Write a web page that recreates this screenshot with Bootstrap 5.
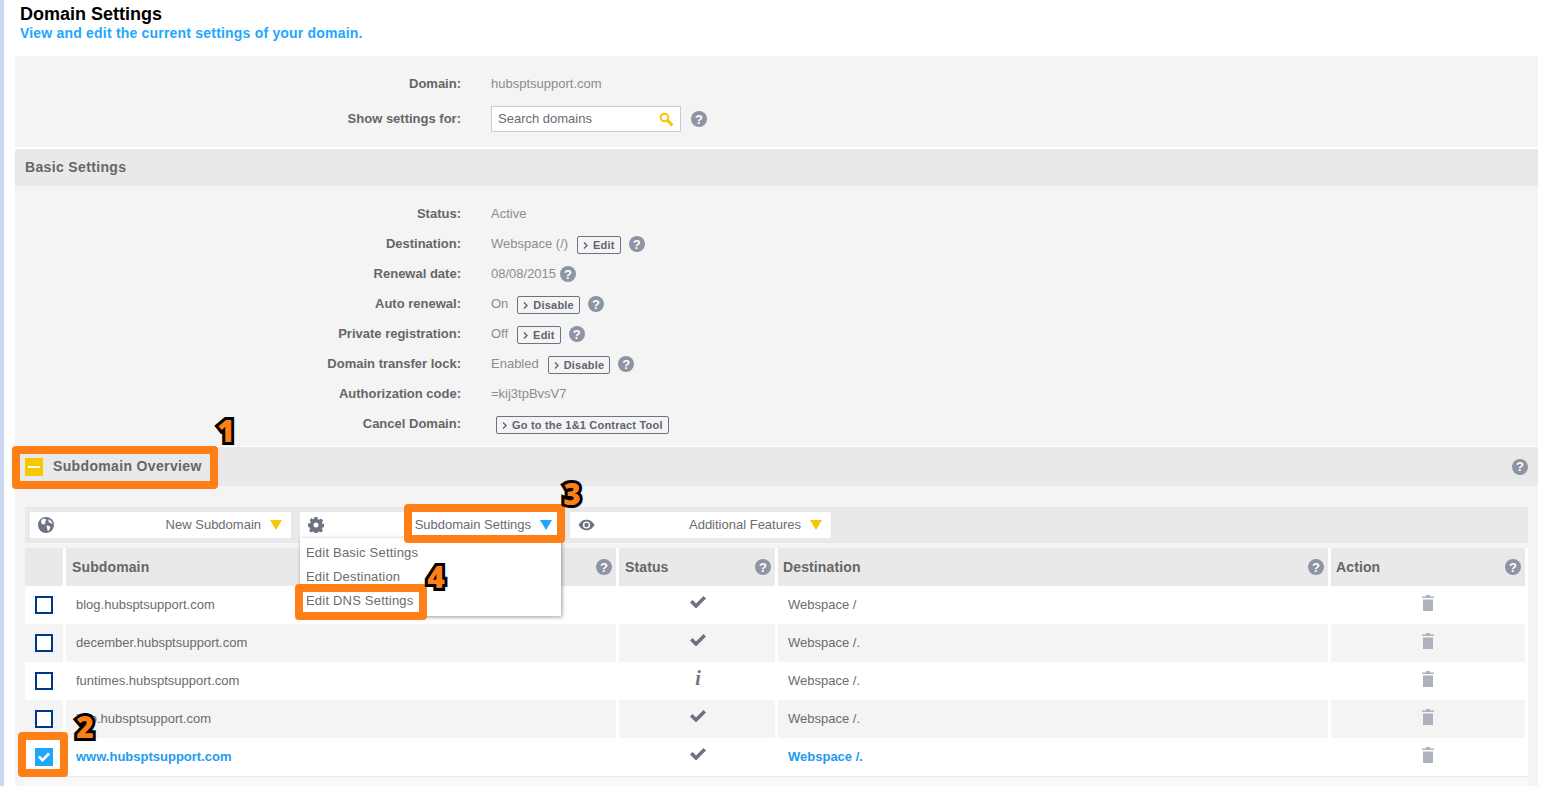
<!DOCTYPE html>
<html lang="en">
<head>
<meta charset="utf-8">
<title>Domain Settings</title>
<link href="https://cdn.jsdelivr.net/npm/bootstrap@5.3.0/dist/css/bootstrap.min.css" rel="stylesheet">
<style>
html,body{height:100%;overflow:hidden;background:#fff}
body{font-family:"Liberation Sans",Arial,sans-serif;font-size:13px;color:#6b6b70;position:relative;line-height:20px}
.edge-strip{width:4px;background:#c9d9ef;flex:none}
.page-main{flex:1;min-width:0;padding-right:8px;padding-left:11px}
.page-head{height:56px;padding:3px 0 0 5px}
.page-title{font-size:18px;font-weight:700;color:#000;line-height:22px;margin:0}
.page-sub{font-size:14px;font-weight:700;color:#1ea7fd;line-height:17px;margin:0;letter-spacing:.2px}
.panel-box{background:#f4f4f4;height:730px}
.top-fields{height:91px;padding-top:12px}
.field-row{height:30px}
.field-gap{margin-top:6px}
.field-lbl{width:446px;text-align:right;font-weight:700;color:#666;flex:none;margin-right:30px;padding-top:2px}
.field-val{color:#8c8c8c;padding-top:2px}
.field-row .help-dot{margin-top:2px}
.field-gap .field-lbl{padding-top:0}
.field-gap .help-dot{margin-top:0;margin-left:10px}
.base-fields{height:260px;padding-top:12px}
.bar-head{background:#e9e9e9;font-weight:700;color:#666;font-size:14px;letter-spacing:.35px;padding:0 10px}
.bar-title{padding-bottom:2px}
.bar-basic{height:39px;border-top:2px solid #fff}
.bar-sub{height:40px;border-top:1px solid #fff}
.help-dot{display:inline-flex;align-items:center;justify-content:center;width:16px;height:16px;border-radius:50%;background:#8d94a3;color:#fff;font-weight:700;font-size:13px;line-height:1;letter-spacing:0;flex:none}
.act-btn{--bs-btn-padding-x:5px;--bs-btn-padding-y:0;--bs-btn-font-size:11px;--bs-btn-font-weight:700;--bs-btn-color:#5f6470;--bs-btn-border-color:#6c7383;--bs-btn-border-radius:2px;--bs-btn-line-height:16px;--bs-btn-hover-color:#5f6470;--bs-btn-hover-border-color:#6c7383;letter-spacing:.2px;display:inline-flex;align-items:center;gap:5px;height:18px;margin-top:4px;margin-left:9px}
.act-wide{margin-left:5px}
.act-btn svg{width:5px;height:7px}
.search-field{width:190px;height:26px;border:1px solid #ccc;background:#fff;padding:0 6px;color:#6b6b70}
.search-field input{border:0;outline:0;background:transparent;padding:0;color:#6b6b70;width:150px;font-size:13px}
.search-field input::placeholder{color:#6b6b70;opacity:1}
.sq-toggle{width:18px;height:18px;background:#f8c700;margin-right:10px;position:relative;flex:none}
.sq-toggle::after{content:"";position:absolute;left:3px;right:3px;top:8px;height:2px;background:#fff}
.tool-strip{background:#e9e9e9;height:36px;margin:21px 10px 5px;padding:5px;gap:9px}
.tool-btn{width:261px;height:26px;background:#fff;padding:0 9px 0 8px;color:#6b6b70;position:relative}
.tool-gear{z-index:2}
.tri{width:0;height:0;border-left:6px solid transparent;border-right:6px solid transparent;border-top:10px solid #f8c700;margin-left:9px;flex:none}
.tri-blue{border-top-color:#1ea7fd}
.tool-menu{position:absolute;left:0;top:26px;width:261px;height:78px;background:#fff;box-shadow:1px 1px 4px rgba(0,0,0,.4);padding:3px 0 1px;z-index:3;letter-spacing:.2px}
.tool-menu div{height:24px;line-height:24px;padding-left:6px}
.ic{fill:#6c7281;display:block}
.ic-trash{fill:#aeb2bc}
.dom-wrap{background:#fff;margin:0 10px;height:229px;border-bottom:1px solid #e9e9e9}
.dom-foot{background:#f8f8f8;margin:0 10px;height:12px}
.dom-grid{width:1503px;table-layout:fixed;border-collapse:separate;border-spacing:0}
.dom-grid th,.dom-grid td{height:38px;padding:0;border-right:3px solid #fff;vertical-align:middle}
.dom-grid th{background:#e9e9e9;color:#666;font-weight:700;font-size:14px;letter-spacing:.12px}
.dom-grid th>div{display:flex;justify-content:space-between;align-items:center;padding:0 4px 0 6px}
.dom-grid th:nth-child(4)>div,.dom-grid th:nth-child(5)>div{padding-left:5px}
.dom-grid tbody tr:nth-child(even) td{background:#f4f4f4}
.dom-grid td.sub-cell,.dom-grid td.dest-cell{padding-left:10px;color:#6b6b70;font-size:13px}
.dom-grid tr.picked td.sub-cell,.dom-grid tr.picked td.dest-cell{color:#1e9bf0;font-weight:700}
.chk-box{display:block;width:18px;height:18px;border:2px solid #00378a;margin-left:10px;background:#fff}
.chk-on{background:#1ea7fd;border-color:#1ea7fd;display:flex;align-items:center;justify-content:center}
.ic-cell svg{margin:-6px auto 0}
.ic-cell svg.ic-trash{margin-top:-4px}
.dom-grid td.st-cell{padding-left:2px}
.info-i{font-family:"Liberation Serif",serif;font-style:italic;font-weight:700;font-size:20px;color:#6c7281;text-align:center;margin-top:-7px;line-height:20px}
.call-box{position:absolute;border:8px solid #ff7f17;border-radius:4px;pointer-events:none;z-index:5}
.call-num{position:absolute;font-family:"Open Sans","Liberation Sans",sans-serif;font-weight:800;font-size:30px;line-height:1;color:#ff7f17;-webkit-text-stroke:6px #000;paint-order:stroke fill;text-shadow:1px 2px 2px rgba(0,0,0,.5);z-index:6;transform:translate(-50%,-50%)}
</style>
</head>
<body class="d-flex">
<div class="edge-strip"></div>
<div class="page-main">
  <div class="page-head">
    <h1 class="page-title">Domain Settings</h1>
    <p class="page-sub">View and edit the current settings of your domain.</p>
  </div>
  <div class="panel-box">
    <div class="top-fields">
      <div class="d-flex align-items-center field-row"><div class="field-lbl">Domain:</div><div class="field-val">hubsptsupport.com</div></div>
      <div class="d-flex align-items-center field-row field-gap"><div class="field-lbl">Show settings for:</div>
        <div class="search-field d-flex align-items-center justify-content-between">
          <input type="text" placeholder="Search domains" aria-label="Search domains">
          <svg width="15" height="15" viewBox="0 0 15 15"><circle cx="5.5" cy="5.5" r="3.8" fill="none" stroke="#f8c700" stroke-width="2"/><path d="M8.3 8.3L13.500 13.500" stroke="#f8c700" stroke-width="3"/></svg>
        </div>
        <span class="help-dot">?</span>
      </div>
    </div>
    <div class="bar-head bar-basic d-flex align-items-center"><span class="bar-title">Basic Settings</span></div>
    <div class="base-fields">
      <div class="d-flex align-items-center field-row"><div class="field-lbl">Status:</div><div class="field-val">Active</div></div>
      <div class="d-flex align-items-center field-row"><div class="field-lbl">Destination:</div><div class="field-val">Webspace (/)</div>
        <button type="button" class="btn act-btn"><svg viewBox="0 0 5 7"><path d="M1 .5L4 3.500L1 6.500" fill="none" stroke="#5f6470" stroke-width="1.4"/></svg>Edit</button><span class="help-dot ms-2">?</span></div>
      <div class="d-flex align-items-center field-row"><div class="field-lbl">Renewal date:</div><div class="field-val">08/08/2015</div><span class="help-dot ms-1">?</span></div>
      <div class="d-flex align-items-center field-row"><div class="field-lbl">Auto renewal:</div><div class="field-val">On</div>
        <button type="button" class="btn act-btn"><svg viewBox="0 0 5 7"><path d="M1 .5L4 3.500L1 6.500" fill="none" stroke="#5f6470" stroke-width="1.4"/></svg>Disable</button><span class="help-dot ms-2">?</span></div>
      <div class="d-flex align-items-center field-row"><div class="field-lbl">Private registration:</div><div class="field-val">Off</div>
        <button type="button" class="btn act-btn"><svg viewBox="0 0 5 7"><path d="M1 .5L4 3.500L1 6.500" fill="none" stroke="#5f6470" stroke-width="1.4"/></svg>Edit</button><span class="help-dot ms-2">?</span></div>
      <div class="d-flex align-items-center field-row"><div class="field-lbl">Domain transfer lock:</div><div class="field-val">Enabled</div>
        <button type="button" class="btn act-btn"><svg viewBox="0 0 5 7"><path d="M1 .5L4 3.500L1 6.500" fill="none" stroke="#5f6470" stroke-width="1.4"/></svg>Disable</button><span class="help-dot ms-2">?</span></div>
      <div class="d-flex align-items-center field-row"><div class="field-lbl">Authorization code:</div><div class="field-val">=kij3tpBvsV7</div></div>
      <div class="d-flex align-items-center field-row"><div class="field-lbl">Cancel Domain:</div>
        <button type="button" class="btn act-btn act-wide"><svg viewBox="0 0 5 7"><path d="M1 .5L4 3.500L1 6.500" fill="none" stroke="#5f6470" stroke-width="1.4"/></svg>Go to the 1&amp;1 Contract Tool</button></div>
    </div>
    <div class="bar-head bar-sub d-flex align-items-center justify-content-between">
      <div class="d-flex align-items-center"><span class="sq-toggle"></span><span class="bar-title">Subdomain Overview</span></div>
      <span class="help-dot">?</span>
    </div>
    <div class="tool-strip d-flex">
      <div class="tool-btn d-flex align-items-center justify-content-between">
        <svg class="ic" width="16" height="16" viewBox="0 0 16 16"><circle cx="8" cy="8" r="8"/><path d="M3.500 2.500L7 1.500L8.500 3L7 5L7.500 7L5 7.500L3 6ZM8.500 8.500L11.500 9L12.500 10.500L10.500 14L9.500 13.500L9 11ZM10.500 2L13.500 4.500L14.500 7L12 6L10.500 4.500Z" fill="#fff"/></svg>
        <span class="d-flex align-items-center">New Subdomain<span class="tri"></span></span>
      </div>
      <div class="tool-btn tool-gear d-flex align-items-center justify-content-between">
        <svg class="ic" width="16" height="16" viewBox="0 0 16 16"><path d="M6.600 0h2.800l.4 2.200 1.300.6 1.900-1.200 2 2-1.200 1.900.6 1.300 2.100.4v2.800l-2.100.4-.6 1.300 1.200 1.900-2 2-1.900-1.200-1.300.6-.4 2.100H6.600l-.4-2.100-1.300-.6L3 15.600l-2-2 1.200-1.900-.6-1.300L0 9.400V6.600l2.200-.4.6-1.300L1.600 3l2-2 1.300 1.200 1.300-.6z"/><circle cx="8" cy="8" r="2.500" fill="#fff"/></svg>
        <span class="d-flex align-items-center">Subdomain Settings<span class="tri tri-blue"></span></span>
        <div class="tool-menu"><div>Edit Basic Settings</div><div>Edit Destination</div><div>Edit DNS Settings</div></div>
      </div>
      <div class="tool-btn d-flex align-items-center justify-content-between">
        <svg class="ic" width="17" height="12" viewBox="0 0 17 12"><path d="M.5 6C3 2 5.500.8 8.500.8S14 2 16.500 6C14 10 11.500 11.200 8.500 11.200S3 10 .5 6Z"/><circle cx="8.500" cy="6" r="3.600" fill="#fff"/><circle cx="8.500" cy="6" r="2.200"/></svg>
        <span class="d-flex align-items-center">Additional Features<span class="tri"></span></span>
      </div>
    </div>
    <div class="dom-wrap">
      <table class="dom-grid">
        <colgroup><col style="width:41px"><col style="width:553px"><col style="width:159px"><col style="width:553px"><col style="width:197px"></colgroup>
        <thead><tr>
          <th></th>
          <th><div>Subdomain<span class="help-dot">?</span></div></th>
          <th><div>Status<span class="help-dot">?</span></div></th>
          <th><div>Destination<span class="help-dot">?</span></div></th>
          <th><div>Action<span class="help-dot">?</span></div></th>
        </tr></thead>
        <tbody>
          <tr><td><span class="chk-box"></span></td><td class="sub-cell">blog.hubsptsupport.com</td><td class="ic-cell st-cell"><svg class="ic" width="16" height="12" viewBox="0 0 16 12"><path d="M0 6.500L2.500 4L6 7.500L13.500 0L16 2.500L6 12.500Z"/></svg></td><td class="dest-cell">Webspace /</td><td class="ic-cell"><svg class="ic ic-trash" width="12" height="16" viewBox="0 0 12 16"><path d="M4 0h4v1.500h4V3H0V1.500h4ZM1 4.500h10V16H1Z"/></svg></td></tr>
          <tr><td><span class="chk-box"></span></td><td class="sub-cell">december.hubsptsupport.com</td><td class="ic-cell st-cell"><svg class="ic" width="16" height="12" viewBox="0 0 16 12"><path d="M0 6.500L2.500 4L6 7.500L13.500 0L16 2.500L6 12.500Z"/></svg></td><td class="dest-cell">Webspace /.</td><td class="ic-cell"><svg class="ic ic-trash" width="12" height="16" viewBox="0 0 12 16"><path d="M4 0h4v1.500h4V3H0V1.500h4ZM1 4.500h10V16H1Z"/></svg></td></tr>
          <tr><td><span class="chk-box"></span></td><td class="sub-cell">funtimes.hubsptsupport.com</td><td class="st-cell"><div class="info-i">i</div></td><td class="dest-cell">Webspace /.</td><td class="ic-cell"><svg class="ic ic-trash" width="12" height="16" viewBox="0 0 12 16"><path d="M4 0h4v1.500h4V3H0V1.500h4ZM1 4.500h10V16H1Z"/></svg></td></tr>
          <tr><td><span class="chk-box"></span></td><td class="sub-cell">info.hubsptsupport.com</td><td class="ic-cell st-cell"><svg class="ic" width="16" height="12" viewBox="0 0 16 12"><path d="M0 6.500L2.500 4L6 7.500L13.500 0L16 2.500L6 12.500Z"/></svg></td><td class="dest-cell">Webspace /.</td><td class="ic-cell"><svg class="ic ic-trash" width="12" height="16" viewBox="0 0 12 16"><path d="M4 0h4v1.500h4V3H0V1.500h4ZM1 4.500h10V16H1Z"/></svg></td></tr>
          <tr class="picked"><td><span class="chk-box chk-on"><svg width="12" height="10" viewBox="0 0 16 12"><path d="M0 6.500L2.500 4L6 7.500L13.500 0L16 2.500L6 12.500Z" fill="#fff"/></svg></span></td><td class="sub-cell">www.hubsptsupport.com</td><td class="ic-cell st-cell"><svg class="ic" width="16" height="12" viewBox="0 0 16 12"><path d="M0 6.500L2.500 4L6 7.500L13.500 0L16 2.500L6 12.500Z"/></svg></td><td class="dest-cell">Webspace /.</td><td class="ic-cell"><svg class="ic ic-trash" width="12" height="16" viewBox="0 0 12 16"><path d="M4 0h4v1.500h4V3H0V1.500h4ZM1 4.500h10V16H1Z"/></svg></td></tr>
        </tbody>
      </table>
    </div>
    <div class="dom-foot"></div>
  </div>
</div>
<div class="call-box" style="left:12px;top:446px;width:206px;height:43px"></div>
<div class="call-box" style="left:18px;top:732px;width:50px;height:45px"></div>
<div class="call-box" style="left:404px;top:504px;width:161px;height:39px"></div>
<div class="call-box" style="left:295px;top:584px;width:132px;height:36px"></div>
<span class="call-num" style="left:226px;top:431px">1</span>
<span class="call-num" style="left:85px;top:727px">2</span>
<span class="call-num" style="left:572px;top:494px">3</span>
<span class="call-num" style="left:436px;top:577px">4</span>
<script src="https://cdn.jsdelivr.net/npm/bootstrap@5.3.0/dist/js/bootstrap.bundle.min.js"></script>
</body>
</html>
